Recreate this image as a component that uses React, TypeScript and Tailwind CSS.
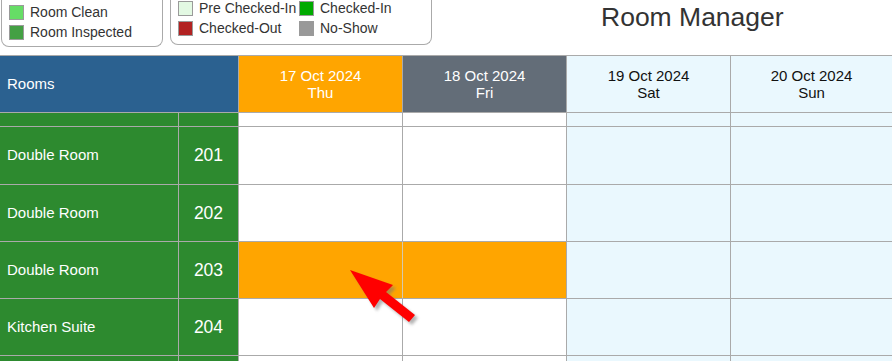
const legendRooms = [
  { label: "Room Clean", color: "bg-[#66dd66]" },
  { label: "Room Inspected", color: "bg-[#44a044]" },
];

const legendBookings = [
  { label: "Pre Checked-In", color: "bg-[#e3f9e3]" },
  { label: "Checked-In", color: "bg-[#00aa00]" },
  { label: "Checked-Out", color: "bg-[#b22222]" },
  { label: "No-Show", color: "bg-[#999999]" },
];

const days = [
  { date: "17 Oct 2024", day: "Thu", head: "bg-[#ffa500] text-white", cell: "bg-white" },
  { date: "18 Oct 2024", day: "Fri", head: "bg-[#636d78] text-white", cell: "bg-white" },
  { date: "19 Oct 2024", day: "Sat", head: "bg-[#eaf8fe] text-[#111]", cell: "bg-[#eaf8fe]" },
  { date: "20 Oct 2024", day: "Sun", head: "bg-[#eaf8fe] text-[#111]", cell: "bg-[#eaf8fe]" },
];

const rooms = [
  { name: "Double Room", no: "201", h: "h-[57px]" },
  { name: "Double Room", no: "202", h: "h-[56px]" },
  { name: "Double Room", no: "203", h: "h-[56px]", booked: true },
  { name: "Kitchen Suite", no: "204", h: "h-[56px]" },
  { name: "", no: "", h: "h-[56px]" },
];

const LegendItem = ({ label, color }: { label: string; color: string }) => {
  return (
    <div className="flex items-center h-5 gap-[6px]">
      <span className={`w-[15px] h-[15px] border border-[#9a9a9a] ${color}`} />
      <span className="text-[14px] text-[#333]">{label}</span>
    </div>
  );
};

const Legends = () => {
  return (
    <div className="flex gap-[7px] pl-px">
      <div className="w-[162px] h-[47px] border-x border-b border-[#aaa] rounded-b-[8px] pl-[7px] pt-[2px]">
        {legendRooms.map((l) => (
          <LegendItem key={l.label} {...l} />
        ))}
      </div>
      <div className="w-[262px] h-[47px] border-x border-b border-[#aaa] rounded-b-[8px] pl-[7px] grid grid-cols-[121px_1fr] content-start -mt-[2px]">
        {legendBookings.map((l) => (
          <LegendItem key={l.label} {...l} />
        ))}
      </div>
    </div>
  );
};

// red pointer drawn over the booking
const Arrow = () => {
  return (
    <svg
      className="absolute left-[340px] top-[260px]"
      width="90"
      height="72"
      viewBox="340 260 90 72"
    >
      <defs>
        <filter id="sh" x="-20%" y="-20%" width="150%" height="150%">
          <feGaussianBlur stdDeviation="1.6" />
        </filter>
      </defs>
      <path
        d="M353 273 L396 288 L389 295 L418 318 L412 325 L383 302 L377 311 Z"
        fill="#777"
        opacity="0.55"
        filter="url(#sh)"
      />
      <path
        d="M350 270 L393 285 L386 292 L415 315 L409 322 L380 299 L374 308 Z"
        fill="#ff0000"
      />
    </svg>
  );
};

export default function App() {
  return (
    <div className="relative w-[892px] h-[361px] overflow-hidden bg-white font-['Liberation_Sans',Arial,sans-serif]">
      <div className="flex h-[55px]">
        <Legends />
        <h1 className="ml-[169px] mt-[1px] text-[26.5px] leading-[32px] text-[#333]">
          Room Manager
        </h1>
      </div>

      <div className="grid grid-cols-[178px_59px_163px_163px_163px_161px] gap-px bg-[#aaa] pt-px">
        <div className="col-span-2 h-[56px] bg-[#2b6190] text-white text-[15px] flex items-center pl-[7px]">
          Rooms
        </div>
        {days.map((d) => (
          <div
            key={d.date}
            className={`h-[56px] flex flex-col items-center justify-center text-[15px] leading-[17px] ${d.head}`}
          >
            <span>{d.date}</span>
            <span>{d.day}</span>
          </div>
        ))}

        <div className="h-[13px] bg-[#2d8a2f]" />
        <div className="h-[13px] bg-[#2d8a2f]" />
        {days.map((d) => (
          <div key={d.date} className={`h-[13px] ${d.cell}`} />
        ))}

        {rooms.map((r, i) => (
          <div key={i} className="contents">
            <div className={`${r.h} bg-[#2d8a2f] text-white text-[15px] flex items-center pl-[7px]`}>
              {r.name}
            </div>
            <div className={`${r.h} bg-[#2d8a2f] text-white text-[17.5px] flex items-center justify-center`}>
              {r.no}
            </div>
            {r.booked ? (
              <div className={`col-span-2 ${r.h} bg-[#ffa500] flex`}>
                <div className="w-[163px]" />
                <div className="w-px bg-[#d6c9ad]" />
              </div>
            ) : (
              days.slice(0, 2).map((d) => (
                <div key={d.date} className={`${r.h} ${d.cell}`} />
              ))
            )}
            {days.slice(2).map((d) => (
              <div key={d.date} className={`${r.h} ${d.cell}`} />
            ))}
          </div>
        ))}
      </div>

      <Arrow />
    </div>
  );
}
